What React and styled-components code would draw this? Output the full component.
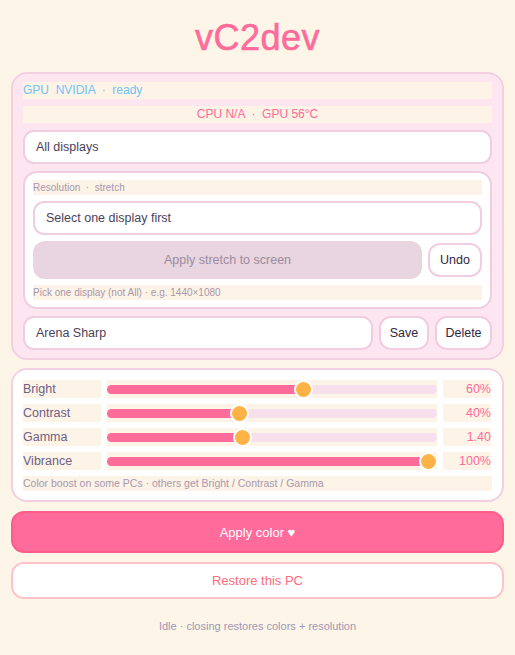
import React from "react";
import styled, { createGlobalStyle } from "styled-components";

const Global = createGlobalStyle`
  html, body { margin: 0; padding: 0; background: #fdf5e8; }
  body { font-family: "Liberation Sans", Arial, sans-serif; }
  * { box-sizing: border-box; }
`;

const Page = styled.div`
  width: 515px;
  min-height: 655px;
  padding: 14px 11px 0 11px;
  display: flex;
  flex-direction: column;
  background: #fdf5e8;
`;

const Title = styled.h1`
  margin: 0;
  height: 50px;
  text-align: center;
  font-size: 36px;
  font-weight: 400;
  color: #ff6b9a;
  -webkit-text-stroke: 0.6px #ff6b9a;
  letter-spacing: 0.5px;
  line-height: 48px;
`;

const Panel = styled.div`
  margin-top: ${(p) => p.$mt || 8}px;
  border: 2px solid #f2d0e2;
  border-radius: 16px;
  background: ${(p) => (p.$white ? "#ffffff" : "#fde6ef")};
  padding: ${(p) => p.$pad || "8px 10px 8px 10px"};
  display: flex;
  flex-direction: column;
  gap: ${(p) => p.$gap || "7px"};
`;

const Strip = styled.div`
  background: #fdf3e7;
  height: ${(p) => p.$h || 17}px;
  line-height: ${(p) => p.$h || 17}px;
  font-size: ${(p) => p.$fs || 12}px;
  color: ${(p) => p.$color};
  text-align: ${(p) => p.$align || "left"};
  white-space: pre;
  flex-shrink: 0;
`;

const Field = styled.div`
  height: ${(p) => p.$h || 34}px;
  flex: ${(p) => (p.$grow ? "1 1 0" : "0 0 auto")};
  border: 2px solid #f0cde0;
  border-radius: 11px;
  background: #fff;
  display: flex;
  align-items: center;
  padding-left: ${(p) => p.$pl || 11}px;
  font-size: 12.5px;
  color: #4a3f5c;
`;

const Card = styled.div`
  border: 2px solid #f0cde0;
  border-radius: 14px;
  background: #fff;
  padding: 7px 8px 7px 8px;
  display: flex;
  flex-direction: column;
  gap: 6px;
`;

const Row = styled.div`
  display: flex;
  align-items: center;
  gap: ${(p) => p.$gap || 6}px;
`;

const BigDisabled = styled.div`
  flex: 1;
  height: 38px;
  border-radius: 12px;
  background: #e8d5df;
  color: #9c8ba0;
  font-size: 12.5px;
  display: flex;
  align-items: center;
  justify-content: center;
`;

const SmallBtn = styled.div`
  height: ${(p) => p.$h || 34}px;
  width: ${(p) => p.$w}px;
  border: 2px solid #f0cde0;
  border-radius: 12px;
  background: #fff;
  color: #2f2640;
  font-size: 12.5px;
  display: flex;
  align-items: center;
  justify-content: center;
  flex-shrink: 0;
`;

const SliderRow = styled.div`
  display: grid;
  grid-template-columns: 78px 330px 48px;
  column-gap: 6px;
  height: 18px;
`;

const Cell = styled.div`
  background: #fdf3e7;
  font-size: 12.5px;
  line-height: 18px;
  color: ${(p) => p.$color || "#6d5f86"};
  display: flex;
  align-items: center;
  justify-content: ${(p) => (p.$align === "right" ? "flex-end" : "flex-start")};
`;

const Track = styled.div`
  position: relative;
  width: 100%;
  height: 9px;
  border-radius: 5px;
  background: #f6e0ec;
`;

const Fill = styled.div`
  height: 100%;
  border-radius: 5px;
  background: #ff6b9a;
`;

const Thumb = styled.div`
  position: absolute;
  top: 50%;
  width: 19px;
  height: 19px;
  margin-left: -9.5px;
  margin-top: -9.5px;
  border-radius: 50%;
  background: #ffb347;
  border: 2px solid #fff;
`;

const PrimaryBtn = styled.div`
  margin-top: 9px;
  height: 42px;
  border: 2px solid #ff5c8c;
  border-radius: 13px;
  background: #ff6b9a;
  color: #fff;
  font-size: 13px;
  display: flex;
  align-items: center;
  justify-content: center;
`;

const SecondaryBtn = styled.div`
  margin-top: 9px;
  height: 37px;
  border: 2px solid #ffc2c8;
  border-radius: 13px;
  background: #fff;
  color: #ff6b7a;
  font-size: 13px;
  display: flex;
  align-items: center;
  justify-content: center;
`;

const Footer = styled.div`
  margin-top: 21px;
  text-align: center;
  font-size: 11px;
  color: #9e97b4;
`;

const sliders = [
  { label: "Bright", pct: 59.4, value: "60%" },
  { label: "Contrast", pct: 40.3, value: "40%" },
  { label: "Gamma", pct: 41, value: "1.40" },
  { label: "Vibrance", pct: 97.5, value: "100%" },
];

export default function App() {
  return (
    <>
      <Global />
      <Page>
        <Title>vC2dev</Title>
        <Panel>
          <Strip $color="#6ec4f7">{"GPU  NVIDIA  ·  ready"}</Strip>
          <Strip $color="#ff6b9a" $align="center">{"CPU N/A  ·  GPU 56°C"}</Strip>
          <Field>All displays</Field>
          <Card>
            <Strip $color="#a898ad" $fs={10} $h={15}>{"Resolution  ·  stretch"}</Strip>
            <Field>Select one display first</Field>
            <Row>
              <BigDisabled>Apply stretch to screen</BigDisabled>
              <SmallBtn $w={54}>Undo</SmallBtn>
            </Row>
            <Strip $color="#a898ad" $fs={10} $h={15}>{"Pick one display (not All) · e.g. 1440×1080"}</Strip>
          </Card>
          <Row $gap={6}>
            <Field $grow>Arena Sharp</Field>
            <SmallBtn $w={50}>Save</SmallBtn>
            <SmallBtn $w={57}>Delete</SmallBtn>
          </Row>
        </Panel>
        <Panel $white $pad="10px 10px 9px 10px" $gap="6px">
          {sliders.map((s) => (
            <SliderRow key={s.label}>
              <Cell>{s.label}</Cell>
              <Cell>
                <Track>
                  <Fill style={{ width: `${s.pct}%` }} />
                  <Thumb style={{ left: `${s.pct}%` }} />
                </Track>
              </Cell>
              <Cell $align="right" $color="#ff6b9a">{s.value}</Cell>
            </SliderRow>
          ))}
          <Strip $color="#a898ad" $fs={10.5} $h={15}>{"Color boost on some PCs · others get Bright / Contrast / Gamma"}</Strip>
        </Panel>
        <PrimaryBtn>Apply color ♥</PrimaryBtn>
        <SecondaryBtn>Restore this PC</SecondaryBtn>
        <Footer>Idle · closing restores colors + resolution</Footer>
      </Page>
    </>
  );
}
